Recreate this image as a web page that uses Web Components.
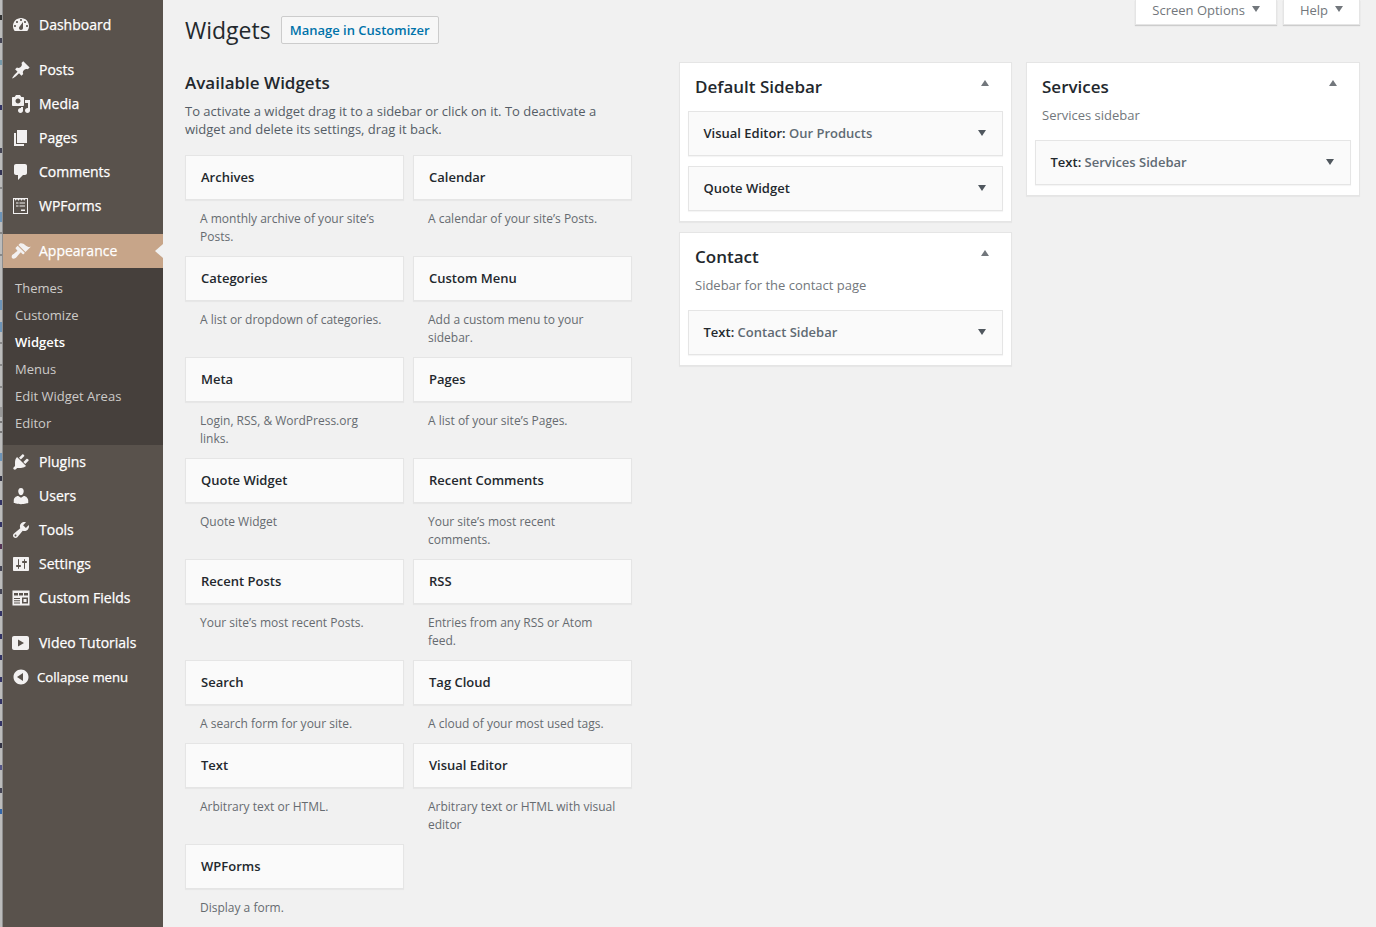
<!DOCTYPE html>
<html>
<head>
<meta charset="utf-8">
<title>Widgets</title>
<style>
html, body { margin: 0; height: 100%; overflow: hidden; background: #f1f1f1; }
body { font: 13px/18px "Open Sans", "Liberation Sans", sans-serif; color: #555d66; }
wp-page { height: 927px; }
</style>
</head>
<body>
<wp-page>
  <wp-menu slot="menu"></wp-menu>
  <wp-screen-meta slot="meta"></wp-screen-meta>
  <span slot="title">Widgets</span>
  <wp-title-button slot="action">Manage in Customizer</wp-title-button>

  <wp-available slot="available">
    <wp-widget-card name="Archives">A monthly archive of your site’s Posts.</wp-widget-card>
    <wp-widget-card name="Calendar">A calendar of your site’s Posts.</wp-widget-card>
    <wp-widget-card name="Categories">A list or dropdown of categories.</wp-widget-card>
    <wp-widget-card name="Custom Menu">Add a custom menu to your sidebar.</wp-widget-card>
    <wp-widget-card name="Meta">Login, RSS, &amp; WordPress.org links.</wp-widget-card>
    <wp-widget-card name="Pages">A list of your site’s Pages.</wp-widget-card>
    <wp-widget-card name="Quote Widget">Quote Widget</wp-widget-card>
    <wp-widget-card name="Recent Comments">Your site’s most recent comments.</wp-widget-card>
    <wp-widget-card name="Recent Posts">Your site’s most recent Posts.</wp-widget-card>
    <wp-widget-card name="RSS">Entries from any RSS or Atom feed.</wp-widget-card>
    <wp-widget-card name="Search">A search form for your site.</wp-widget-card>
    <wp-widget-card name="Tag Cloud">A cloud of your most used tags.</wp-widget-card>
    <wp-widget-card name="Text">Arbitrary text or HTML.</wp-widget-card>
    <wp-widget-card name="Visual Editor">Arbitrary text or HTML with visual editor</wp-widget-card>
    <wp-widget-card name="WPForms">Display a form.</wp-widget-card>
  </wp-available>

  <div slot="col2">
    <wp-sidebar-box name="Default Sidebar">
      <wp-placed-widget name="Visual Editor:" sub="Our Products"></wp-placed-widget>
      <wp-placed-widget name="Quote Widget"></wp-placed-widget>
    </wp-sidebar-box>
    <wp-sidebar-box name="Contact" desc="Sidebar for the contact page">
      <wp-placed-widget name="Text:" sub="Contact Sidebar"></wp-placed-widget>
    </wp-sidebar-box>
  </div>
  <div slot="col3">
    <wp-sidebar-box name="Services" desc="Services sidebar">
      <wp-placed-widget name="Text:" sub="Services Sidebar"></wp-placed-widget>
    </wp-sidebar-box>
  </div>
</wp-page>

<script>
const ICONS = {
  dashboard: 'M3.76 16h12.48c1.1-1.37 1.76-3.11 1.76-5 0-4.42-3.58-8-8-8s-8 3.58-8 8c0 1.89.66 3.63 1.76 5zM10 4c.55 0 1 .45 1 1s-.45 1-1 1-1-.45-1-1 .45-1 1-1zM6 6c.55 0 1 .45 1 1s-.45 1-1 1-1-.45-1-1 .45-1 1-1zm8 0c.55 0 1 .45 1 1s-.45 1-1 1-1-.45-1-1 .45-1 1-1zm-5.37 5.55L12 7v6c0 1.1-.9 2-2 2s-2-.9-2-2c0-.57.24-1.08.63-1.45zM4 10c.55 0 1 .45 1 1s-.45 1-1 1-1-.45-1-1 .45-1 1-1zm12 0c.55 0 1 .45 1 1s-.45 1-1 1-1-.45-1-1 .45-1 1-1z',
  pin: 'M10.44 3.02l1.82-1.82 6.36 6.35-1.83 1.82c-1.05-.68-2.48-.57-3.41.36l-.75.75c-.92.93-1.04 2.35-.35 3.41l-1.83 1.82-2.41-2.41-2.8 2.79c-.42.42-3.38 2.71-3.8 2.29s1.86-3.39 2.28-3.81l2.79-2.79L4.1 9.36l1.83-1.82c1.05.69 2.48.57 3.4-.36l.75-.75c.93-.92 1.05-2.35.36-3.41z',
  media: 'M13 11V4c0-.55-.45-1-1-1h-1.67L9 1H5L3.67 3H2c-.55 0-1 .45-1 1v7c0 .55.45 1 1 1h10c.55 0 1-.45 1-1zM7 4.5c1.38 0 2.5 1.12 2.5 2.5S8.38 9.5 7 9.5 4.5 8.38 4.5 7 5.62 4.5 7 4.5zM14 6h5v10.5c0 1.38-1.12 2.5-2.5 2.5S14 17.88 14 16.5s1.12-2.5 2.5-2.5c.17 0 .34.02.5.05V9h-3V6zm-4 8.05V13h2v3.5c0 1.38-1.12 2.5-2.5 2.5S7 17.88 7 16.5 8.12 14 9.5 14c.17 0 .34.02.5.05z',
  pages: 'M6 15V2h10v13H6zm-1 1h8v2H3V5h2v11z',
  comments: 'M5 2h9c1.1 0 2 .9 2 2v7c0 1.1-.9 2-2 2h-2l-5 5v-5H5c-1.1 0-2-.9-2-2V4c0-1.1.9-2 2-2z',
  wpforms: 'M2 2h15v16H2V2zm1 1v14h13V3h-1.500l-1.300 1.800L12 3l-1.500 1.800L9 3 7.500 4.800 6 3 4.700 4.800 3.500 3H3zm2 3.500h2.500v1H5v-1zm3.500 0H14v1H8.500v-1zM5 9.500h2.500v1H5v-1zm3.500 0H14v1H8.500v-1zm1.500 4h4V15h-4v-1.500z',
  appearance: 'M14.48 11.06L7.41 3.99l1.5-1.5c.5-.56 2.3-.47 3.51.32 1.21.8 1.43 1.28 2.91 2.1 1.18.64 2.45 1.26 4.45.85zm-.71.71L6.7 4.7 4.93 6.47c-.39.39-.39 1.02 0 1.41l1.06 1.06c.39.39.39 1.03 0 1.42-.6.6-1.43 1.11-2.21 1.69-.35.26-.7.53-1.01.84C1.43 12.75 0 15.5 1 17s4.2.4 5.5-1.9c.2-.35.5-.7.84-1.01.58-.78 1.09-1.61 1.69-2.21.39-.39 1.03-.39 1.42 0l1.06 1.06c.39.39 1.02.39 1.41 0z',
  plugins: 'M13.11 4.36L9.87 7.6 8 5.73l3.24-3.24c.35-.34 1.05-.2 1.56.32.52.51.66 1.21.31 1.55zm-8 1.77l.91-1.12 9.01 9.01-1.19.84c-.71.71-2.63 1.16-3.82 1.16H6.14L4.9 17.26c-.59.59-1.54.59-2.12 0-.59-.58-.59-1.53 0-2.12l1.24-1.24v-3.88c0-1.13.4-3.19 1.09-3.89zm7.26 3.97l3.24-3.24c.34-.35 1.04-.21 1.55.31.52.51.66 1.21.31 1.55l-3.24 3.25z',
  users: 'M10 9.25c-2.27 0-2.73-3.44-2.73-3.44C7 4.02 7.82 2 9.97 2c2.16 0 2.98 2.02 2.71 3.81 0 0-.41 3.44-2.68 3.44zm0 2.57L12.72 10c2.39 0 4.52 2.33 4.52 4.53v2.49s-3.65 1.13-7.24 1.13c-3.65 0-7.24-1.13-7.24-1.13v-2.49c0-2.25 1.94-4.48 4.47-4.48z',
  tools: 'M16.68 9.77c-1.34 1.34-3.3 1.67-4.95.99l-5.41 6.52c-.99.99-2.59.99-3.58 0s-.99-2.59 0-3.57l6.52-5.42c-.68-1.65-.35-3.61.99-4.95 1.28-1.28 3.12-1.62 4.72-1.06l-2.89 2.89 2.82 2.82 2.86-2.87c.53 1.58.18 3.39-1.08 4.65zM3.81 16.21c.4.39 1.04.39 1.43 0 .4-.4.4-1.04 0-1.43-.39-.4-1.03-.4-1.43 0-.39.39-.39 1.03 0 1.43z',
  settings: 'M18 16V4c0-.55-.45-1-1-1H3c-.55 0-1 .45-1 1v12c0 .55.45 1 1 1h14c.55 0 1-.45 1-1zM8 11h1c.55 0 1 .45 1 1s-.45 1-1 1H8v1.5c0 .28-.22.5-.5.5s-.5-.22-.5-.5V13H6c-.55 0-1-.45-1-1s.45-1 1-1h1V5.5c0-.28.22-.5.5-.5s.5.22.5.5V11zm5-2h-1c-.55 0-1-.45-1-1s.45-1 1-1h1V5.5c0-.28.22-.5.5-.5s.5.22.5.5V7h1c.55 0 1 .45 1 1s-.45 1-1 1h-1v5.5c0 .28-.22.5-.5.5s-.5-.22-.5-.5V9z',
  fields: 'M1.500 2.500h17v15h-17zM3 5v2.500h4V5H3zm5 0v2.500h4V5H8zm5 0v2.500h4V5h-4zM3 10v1h6v-1H3zm0 2.300v1h6v-1H3zm0 2.300v1h6v-1H3zM11 9.500v6h6v-6h-6zm1.500 1.500h3v3h-3v-3z',
  video: 'M18 15V5c0-1.100-.9-2-2-2H3c-1.100 0-2 .9-2 2v10c0 1.100.9 2 2 2h13c1.100 0 2-.9 2-2zM7 13.500v-7l6 3.500z',
  collapse: 'M10 2.500c4.140 0 7.500 3.360 7.500 7.500 0 4.140-3.360 7.500-7.500 7.500S2.500 14.140 2.500 10 5.860 2.500 10 2.500zm2 3.500l-6 4 6 4V6z'
};

function icon(name) {
  return `<svg width="20" height="20" viewBox="0 0 20 20" fill="currentColor" fill-rule="evenodd"><path d="${ICONS[name]}"/></svg>`;
}

// bit of the window behind, showing down the left edge of the screenshot: [from, to, colour]
const EDGE_MARKS = [
  [15, 20, '#333'], [38, 43, '#445'], [60, 65, '#79a'], [105, 110, '#336'], [148, 153, '#445'], [170, 175, '#335'],
  [187, 189, '#888'], [212, 222, '#6d94b8'], [232, 234, '#888'], [254, 256, '#888'],
  [300, 310, '#6d94b8'], [322, 332, '#6d94b8'], [342, 344, '#888'], [364, 366, '#888'], [386, 388, '#888'],
  [407, 417, '#999'], [421, 423, '#777'], [431, 433, '#777'], [453, 461, '#6d94b8'],
  [476, 481, '#334'], [500, 505, '#336'], [522, 527, '#336'], [544, 549, '#535'], [566, 571, '#445'], [589, 594, '#445'],
  [611, 616, '#336'], [634, 639, '#336'], [655, 660, '#336'], [677, 682, '#336'], [699, 704, '#336'], [721, 726, '#336'],
  [743, 748, '#334'], [765, 770, '#558'], [788, 793, '#445'], [809, 814, '#36a']
];

class WpPage extends HTMLElement {
  constructor() {
    super();
    const stops = ['#bcbcbc 0'];
    EDGE_MARKS.forEach(([a, b, c]) => {
      stops.push(`#bcbcbc ${a}px`, `${c} ${a}px`, `${c} ${b}px`, `#bcbcbc ${b}px`);
    });
    this.attachShadow({ mode: 'open' }).innerHTML = `
      <style>
        :host { display: grid; grid-template-columns: 3px 160px 1fr; height: 927px; overflow: hidden; }
        .edge { background: #8e8e8e linear-gradient(${stops.join(', ')}) no-repeat 0 0 / 2px 100%; }
        main { padding: 0 16px 0 22px; min-width: 0; }
        header { display: flex; justify-content: space-between; align-items: flex-start; height: 62px; }
        .head { display: flex; align-items: center; gap: 10px; padding-top: 16px; }
        h1 { margin: 0; font: 400 23px/28px "Open Sans", sans-serif; color: #23282d; }
        .cols { display: grid; grid-template-columns: 447px 380px 1fr; }
        .left { padding-top: 8px; }
        .mid { margin-left: 47px; }
        .right { margin-left: 14px; }
        h2 { margin: 0 0 6px; font: 600 17px/26px "Open Sans", sans-serif; color: #23282d; }
        p { margin: 0 0 17px; width: 430px; }
      </style>
      <div class="edge"></div>
      <slot name="menu"></slot>
      <main>
        <header>
          <div class="head"><h1><slot name="title"></slot></h1><slot name="action"></slot></div>
          <slot name="meta"></slot>
        </header>
        <div class="cols">
          <div class="left">
            <h2>Available Widgets</h2>
            <p>To activate a widget drag it to a sidebar or click on it. To deactivate a widget and delete its settings, drag it back.</p>
            <slot name="available"></slot>
          </div>
          <div class="mid"><slot name="col2"></slot></div>
          <div class="right"><slot name="col3"></slot></div>
        </div>
      </main>`;
  }
}

class WpMenu extends HTMLElement {
  constructor() {
    super();
    const row = (ic, label, extra = '') => `<a class="item ${extra}">${icon(ic)}<span>${label}</span></a>`;
    this.attachShadow({ mode: 'open' }).innerHTML = `
      <style>
        :host { display: block; background: #59524c; color: #fff; padding-top: 8px; font-size: 14px; }
        .item { display: flex; align-items: center; height: 34px; padding-left: 8px; gap: 8px; position: relative; -webkit-text-stroke: .25px #fff; }
        .item svg { flex: none; color: #f3f1f1; }
        .sep { height: 11px; }
        .current { background: #c7a589; }
        .current::after {
          content: ""; position: absolute; right: 0; top: 10px;
          border: 7px solid transparent; border-right: 8px solid #f1f1f1; border-left-width: 0;
        }
        .sub { background: #46403c; padding: 7px 0 8px; color: #cdcbc9; }
        .sub div { height: 27px; line-height: 27px; padding-left: 12px; font-size: 13px; }
        .sub .on { color: #fff; font-weight: 600; }
        .collapse { gap: 6px; font-size: 13.2px; }
      </style>
      ${row('dashboard', 'Dashboard')}
      <div class="sep"></div>
      ${row('pin', 'Posts')}
      ${row('media', 'Media')}
      ${row('pages', 'Pages')}
      ${row('comments', 'Comments')}
      ${row('wpforms', 'WPForms')}
      <div class="sep"></div>
      ${row('appearance', 'Appearance', 'current')}
      <div class="sub">
        <div>Themes</div><div>Customize</div><div class="on">Widgets</div>
        <div>Menus</div><div>Edit Widget Areas</div><div>Editor</div>
      </div>
      ${row('plugins', 'Plugins')}
      ${row('users', 'Users')}
      ${row('tools', 'Tools')}
      ${row('settings', 'Settings')}
      ${row('fields', 'Custom Fields')}
      <div class="sep"></div>
      ${row('video', 'Video Tutorials')}
      ${row('collapse', 'Collapse menu', 'collapse')}`;
  }
}

class WpScreenMeta extends HTMLElement {
  constructor() {
    super();
    this.attachShadow({ mode: 'open' }).innerHTML = `
      <style>
        :host { display: flex; gap: 6px; }
        div {
          height: 24px; line-height: 20px; background: #fff; color: #72777c; padding: 0 16px;
          box-shadow: 0 1px 1px rgba(0,0,0,.15); display: flex; gap: 7px; border: 1px solid #e5e5e5; border-top: 0;
        }
        i { width: 0; height: 0; margin-top: 6px; border: 4.5px solid transparent; border-top: 6px solid #72777c; border-bottom: 0; }
      </style>
      <div>Screen Options <i></i></div>
      <div>Help <i></i></div>`;
  }
}

class WpTitleButton extends HTMLElement {
  constructor() {
    super();
    this.attachShadow({ mode: 'open' }).innerHTML = `
      <style>
        :host {
          display: block; height: 26px; line-height: 26px; padding: 0 8px; font-size: 13px; font-weight: 600;
          color: #0073aa; background: #f7f7f7; border: 1px solid #ccc; border-radius: 2px; white-space: nowrap;
        }
      </style>
      <slot></slot>`;
  }
}

class WpAvailable extends HTMLElement {
  constructor() {
    super();
    this.attachShadow({ mode: 'open' }).innerHTML = `
      <style>
        :host { display: grid; grid-template-columns: 219px 219px; column-gap: 9px; }
      </style>
      <slot></slot>`;
  }
}

class WpWidgetCard extends HTMLElement {
  constructor() {
    super();
    this.attachShadow({ mode: 'open' }).innerHTML = `
      <style>
        :host { display: block; }
        .bar {
          box-sizing: border-box; height: 45px; line-height: 43px; padding-left: 15px;
          background: #fafafa; border: 1px solid #e5e5e5; box-shadow: 0 1px 1px rgba(0,0,0,.04);
          font-weight: 600; color: #23282d;
        }
        .desc { padding: 10px 15px; font-size: 12px; color: #666b70; }
      </style>
      <div class="bar"></div>
      <div class="desc"><slot></slot></div>`;
  }
  connectedCallback() {
    this.shadowRoot.querySelector('.bar').textContent = this.getAttribute('name');
  }
}

class WpSidebarBox extends HTMLElement {
  constructor() {
    super();
    this.attachShadow({ mode: 'open' }).innerHTML = `
      <style>
        :host {
          display: block; background: #fff; border: 1px solid #e5e5e5; box-shadow: 0 1px 1px rgba(0,0,0,.04);
          padding: 0 8px 10px; margin-bottom: 10px;
        }
        .top { display: flex; justify-content: space-between; height: 48px; }
        h2 { margin: 0; padding: 10px 7px 0; font: 600 17px/28px "Open Sans", sans-serif; color: #23282d; }
        i { width: 0; height: 0; margin: 17px 14px 0 0; border: 4.5px solid transparent; border-bottom: 6px solid #72777c; border-top: 0; }
        .desc { padding: 0 7px; margin: -5px 0 16px; color: #72777c; }
        .desc:empty { display: none; }
        .list { display: flex; flex-direction: column; gap: 10px; }
      </style>
      <div class="top"><h2></h2><i></i></div>
      <div class="desc"></div>
      <div class="list"><slot></slot></div>`;
  }
  connectedCallback() {
    this.shadowRoot.querySelector('h2').textContent = this.getAttribute('name');
    this.shadowRoot.querySelector('.desc').textContent = this.getAttribute('desc') || '';
  }
}

class WpPlacedWidget extends HTMLElement {
  constructor() {
    super();
    this.attachShadow({ mode: 'open' }).innerHTML = `
      <style>
        :host {
          display: flex; justify-content: space-between; align-items: center; box-sizing: border-box; height: 45px;
          padding: 0 16px 2px 14.5px; background: #fafafa; border: 1px solid #e5e5e5; box-shadow: 0 1px 1px rgba(0,0,0,.04);
          font-weight: 600; color: #23282d;
        }
        span span { color: #606a73; }
        i { width: 0; height: 0; border: 4.5px solid transparent; border-top: 6px solid #50575e; border-bottom: 0; }
      </style>
      <span><b style="font-weight:inherit"></b> <span></span></span><i></i>`;
  }
  connectedCallback() {
    this.shadowRoot.querySelector('b').textContent = this.getAttribute('name');
    this.shadowRoot.querySelector('span span').textContent = this.getAttribute('sub') || '';
  }
}

customElements.define('wp-page', WpPage);
customElements.define('wp-menu', WpMenu);
customElements.define('wp-screen-meta', WpScreenMeta);
customElements.define('wp-title-button', WpTitleButton);
customElements.define('wp-available', WpAvailable);
customElements.define('wp-widget-card', WpWidgetCard);
customElements.define('wp-sidebar-box', WpSidebarBox);
customElements.define('wp-placed-widget', WpPlacedWidget);
</script>
</body>
</html>
